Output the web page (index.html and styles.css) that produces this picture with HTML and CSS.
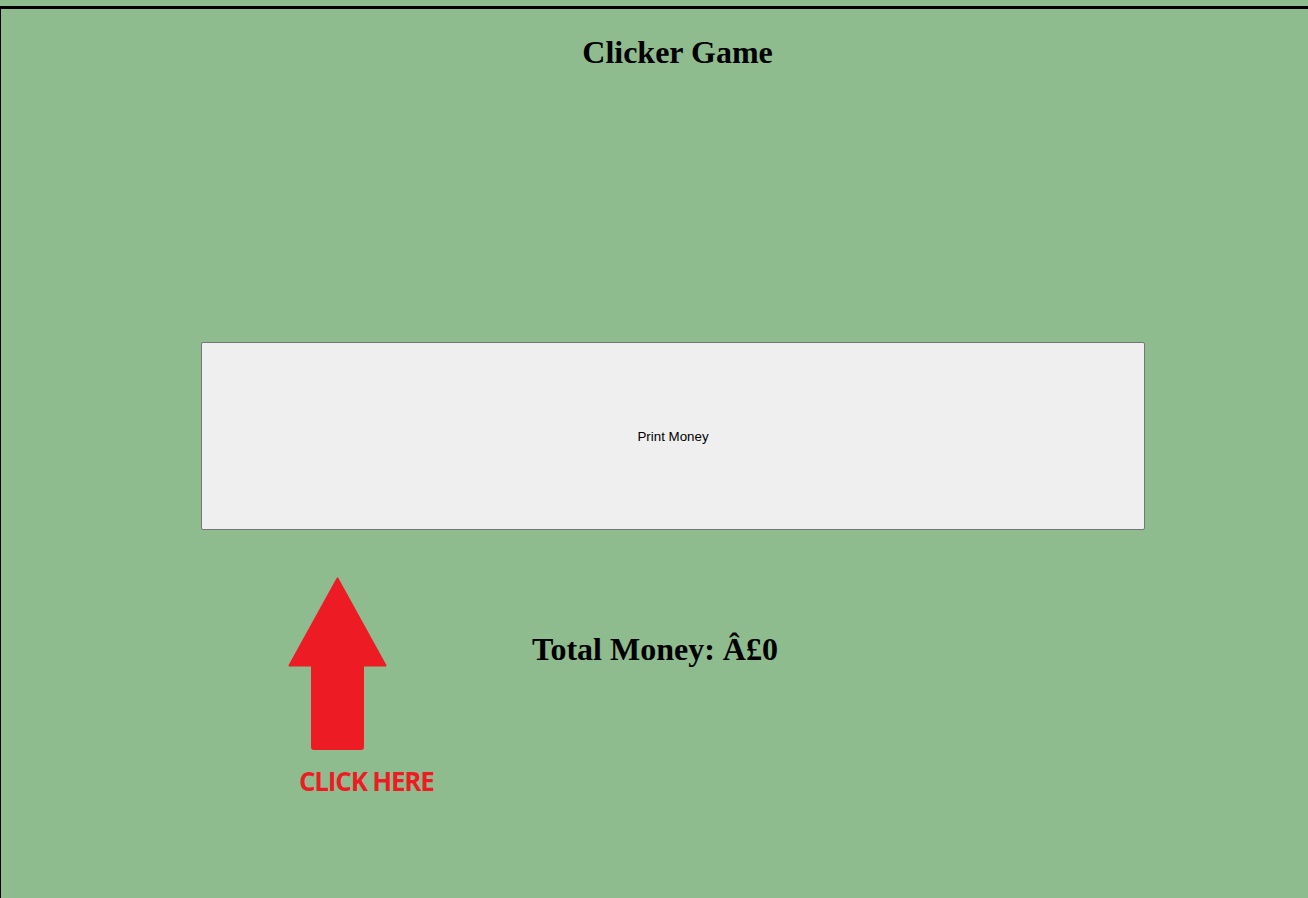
FILE: index.html
```html
<!DOCTYPE html>
<html lang="en">
<head>
<meta charset="utf-8">
<title>Clicker Game</title>
<link rel="stylesheet" href="styles.css">
</head>
<body>
<div class="page">
  <h1 class="title">Clicker Game</h1>
  <button class="print-btn" type="button">Print Money</button>
  <div class="lower-row">
    <div class="hint">
      <svg class="hint-arrow" width="100" height="174" viewBox="0 0 100 174" aria-hidden="true">
        <path d="M49.5 1.5 L97.5 88.5 L75 88.5 L75 170 Q75 172 73 172 L26 172 Q24 172 24 170 L24 88.5 L1.5 88.5 Z" fill="#ed1c24" stroke="#ed1c24" stroke-width="2" stroke-linejoin="round"/>
      </svg>
      <div class="hint-text">CLICK HERE</div>
    </div>
    <h2 class="total">Total Money: Â£0</h2>
  </div>
</div>
</body>
</html>
```

FILE: styles.css
```css
html, body {
  margin: 0;
  padding: 0;
}

body {
  background: #8fbc8f;
  font-family: "Liberation Serif", "Times New Roman", serif;
  color: #000;
}

.page {
  margin-top: 6px;
  border-top: 3px solid #000;
  border-left: 1px solid #000;
  min-height: 900px;
}

.title {
  margin: 25px 0 0;
  padding-left: 46px;
  text-align: center;
  font-size: 32px;
  font-weight: bold;
  line-height: normal;
}

.print-btn {
  display: block;
  box-sizing: border-box;
  margin: 271px 0 0 200px;
  width: 944px;
  height: 188px;
  background: #efefef;
  border: 1px solid #767676;
  border-radius: 2px;
  padding: 0;
  font-family: "Liberation Sans", Arial, sans-serif;
  font-size: 13.333px;
  color: #000;
}

.lower-row {
  display: flex;
  align-items: flex-start;
  margin-top: 47px;
  padding-left: 287px;
}

.hint {
  width: 150px;
  display: flex;
  flex-direction: column;
}

.hint-arrow {
  display: block;
}

.hint-text {
  margin: 15px 0 0 11px;
  font-family: "Open Sans", "Noto Sans", sans-serif;
  font-weight: bold;
  font-size: 26px;
  line-height: 30px;
  letter-spacing: -1.2px;
  color: #ed1c24;
  white-space: nowrap;
}

.total {
  margin: 54px 0 0 94px;
  font-size: 32px;
  font-weight: bold;
  line-height: normal;
}
```
